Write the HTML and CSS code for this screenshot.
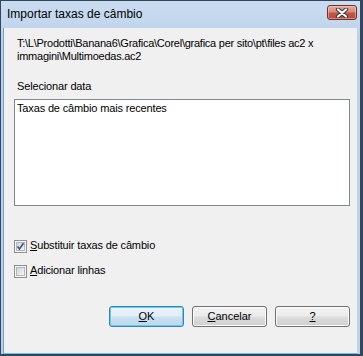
FILE: index.html
```html
<!DOCTYPE html>
<html lang="pt">
<head>
  <meta charset="UTF-8" />
  <title>Importar taxas de câmbio</title>
  <link rel="stylesheet" href="styles.css">
</head>
<body>
  <div class="window">
    <div class="titlebar">
      <span class="title">Importar taxas de câmbio</span>
      <div class="close">
        <svg width="14" height="10" viewBox="0 0 14 10">
          <path d="M3 1.5 L11 8.5 M11 1.5 L3 8.5" stroke="#3b3b3b" stroke-width="4.2" stroke-linecap="round" fill="none" />
          <path d="M3 1.5 L11 8.5 M11 1.5 L3 8.5" stroke="#ffffff" stroke-width="2.2" stroke-linecap="round" fill="none" />
        </svg>
      </div>
    </div>

    <div class="client">
      <p class="path">T:\L\Prodotti\Banana6\Grafica\Corel\grafica per sito\pt\files ac2 x<br>immagini\Multimoedas.ac2</p>
      <p class="label">Selecionar data</p>
      <div class="listbox">
        <div class="item">Taxas de câmbio mais recentes</div>
      </div>

      <!-- Options -->
      <div class="check-row first">
        <span class="cb">
          <span class="cb-inner">
            <svg width="9" height="9" viewBox="0 0 9 9">
              <path d="M1.5 4.5 L3.5 7 L7.5 1.2" stroke="#3d5489" stroke-width="1.6" fill="none" />
            </svg>
          </span>
        </span>
        <span class="cb-label"><u>S</u>ubstituir taxas de câmbio</span>
      </div>
      <div class="check-row">
        <span class="cb"><span class="cb-inner"></span></span>
        <span class="cb-label"><u>A</u>dicionar linhas</span>
      </div>

      <div class="buttons">
        <button class="btn default"><u>O</u>K</button>
        <button class="btn"><u>C</u>ancelar</button>
        <button class="btn"><u>?</u></button>
      </div>
    </div>
  </div>
</body>
</html>
```

FILE: styles.css
```css
body {
  margin: 0;
  background: #ffffff;
  font-family: "Liberation Sans", Arial, sans-serif;
}
.window {
  width: 363px;
  height: 356px;
  box-sizing: border-box;
  border-style: solid;
  border-color: #34465c;
  border-width: 1px 3px 2px 1px;
  padding: 0 3px 0 2px;
  background: linear-gradient(#cadcf0, #bcd2ea 40px, #bcd2ea);
  display: flex;
  flex-direction: column;
}
.titlebar {
  height: 27px;
  flex: none;
  display: flex;
  justify-content: space-between;
  align-items: flex-start;
}
.title {
  margin: 6px 0 0 4px;
  font-size: 12px;
  line-height: 15px;
  color: #000;
}
.close {
  margin-top: 4px;
  width: 30px;
  height: 15px;
  box-sizing: border-box;
  border: 1px solid #6e2f27;
  border-radius: 3px;
  background: linear-gradient(#e4ab9f 0%, #d68a7c 45%, #c65443 55%, #c0473a 100%);
  box-shadow: inset 0 0 0 1px rgba(255, 220, 210, 0.45);
  display: flex;
  align-items: center;
  justify-content: center;
}
.client {
  flex: 1;
  background: #f0f0f0;
  border-left: 1px solid #6f9fcf;
  border-bottom: 1px solid #5ec4ec;
  padding: 9px 7px 0 10px;
  font-size: 11px;
  line-height: 13px;
  letter-spacing: -0.15px;
  color: #000;
}
.path {
  margin: 0 0 0 3px;
  white-space: nowrap;
  letter-spacing: -0.25px;
}
.label {
  margin: 17px 0 0 3px;
}
.listbox {
  margin-top: 6px;
  height: 107px;
  box-sizing: border-box;
  border: 1px solid #828790;
  background: #ffffff;
  padding: 2px 2px;
}
.check-row {
  display: flex;
  align-items: flex-start;
  margin-top: 11px;
}
.check-row.first {
  margin-top: 33px;
}
.cb {
  width: 13px;
  height: 13px;
  margin-top: 1px;
  box-sizing: border-box;
  border: 1px solid #8e8f8f;
  background: #f6f6f6;
  padding: 1px;
  flex: none;
}
.cb-inner {
  display: block;
  width: 9px;
  height: 9px;
  box-sizing: border-box;
  border: 1px solid #b3b6ba;
  background: linear-gradient(135deg, #d3d5d8, #f5f5f5);
  position: relative;
}
.cb-inner svg {
  position: absolute;
  left: -1px;
  top: -1px;
}
.cb-label {
  margin-left: 3px;
}
.buttons {
  display: flex;
  justify-content: flex-end;
  gap: 8px;
  margin-top: 28px;
}
.btn {
  width: 75px;
  height: 21px;
  box-sizing: border-box;
  border: 1px solid #707070;
  border-radius: 3px;
  background: linear-gradient(#f2f2f2 0%, #ebebeb 48%, #dddddd 52%, #cfcfcf 100%);
  box-shadow: inset 0 0 0 1px #fbfbfb;
  font-family: "Liberation Sans", Arial, sans-serif;
  font-size: 11px;
  line-height: 13px;
  color: #000;
  padding: 0;
}
.btn.default {
  border-color: #3c7fb1;
  background: linear-gradient(#eaf4fb 0%, #e1eef8 48%, #cde2f0 52%, #bcd6e9 100%);
  box-shadow: inset 0 0 0 1px #62cff5;
}
```
